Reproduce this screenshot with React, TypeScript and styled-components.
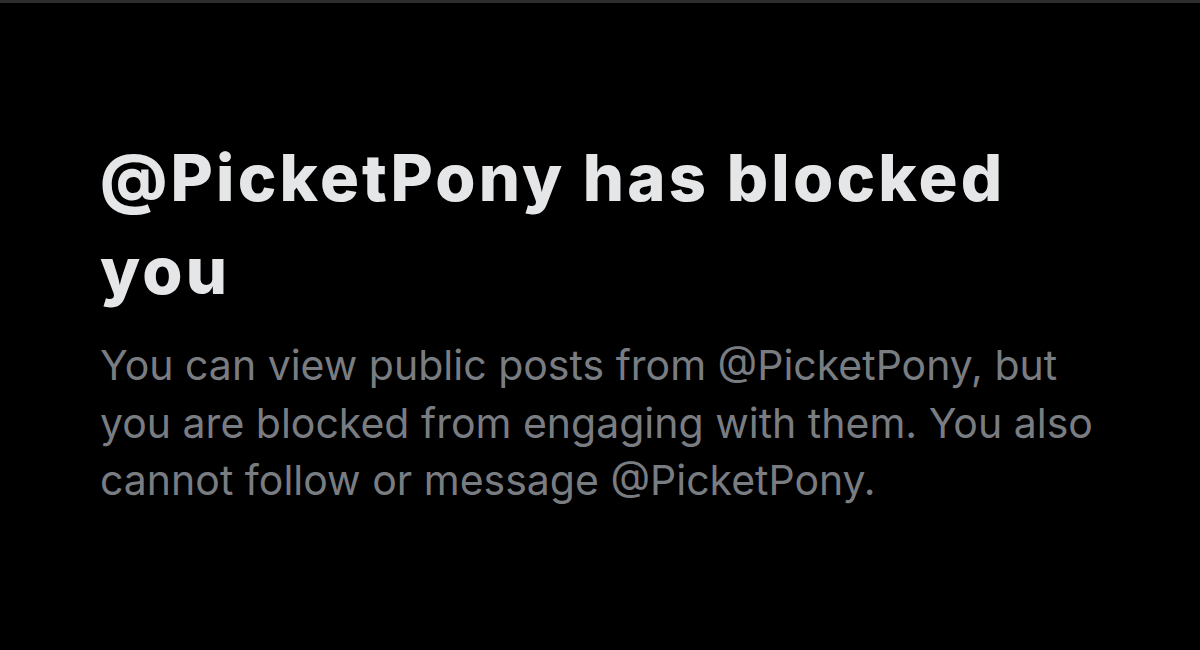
import React from "react";
import styled, { createGlobalStyle } from "styled-components";

const GlobalStyle = createGlobalStyle`
  html, body {
    margin: 0;
    padding: 0;
    background: #000;
  }
  body {
    font-family: Inter, "Liberation Sans", Arial, sans-serif;
  }
`;

const Page = styled.div`
  width: 1200px;
  height: 650px;
  box-sizing: border-box;
  background: #000;
  border-top: 3px solid #2a2c2e;
  overflow: hidden;
`;

const Content = styled.div`
  padding: 128px 100px 0 100px;
  display: flex;
  flex-direction: column;
  gap: 20px;
  max-width: 1010px;
`;

const Title = styled.h1`
  margin: 0;
  font-size: 65px;
  line-height: 93px;
  font-weight: 800;
  letter-spacing: 3.2px;
  color: #e4e6e7;
`;

const Body = styled.p`
  margin: 0;
  font-size: 41px;
  line-height: 57.5px;
  color: #797d82;
`;

export default function App() {
  return (
    <>
      <GlobalStyle />
      <Page>
        <Content>
          <Title>@PicketPony has blocked you</Title>
          <Body>
            You can view public posts from @PicketPony, but you are blocked
            from engaging with them. You also cannot follow or message
            @PicketPony.
          </Body>
        </Content>
      </Page>
    </>
  );
}
